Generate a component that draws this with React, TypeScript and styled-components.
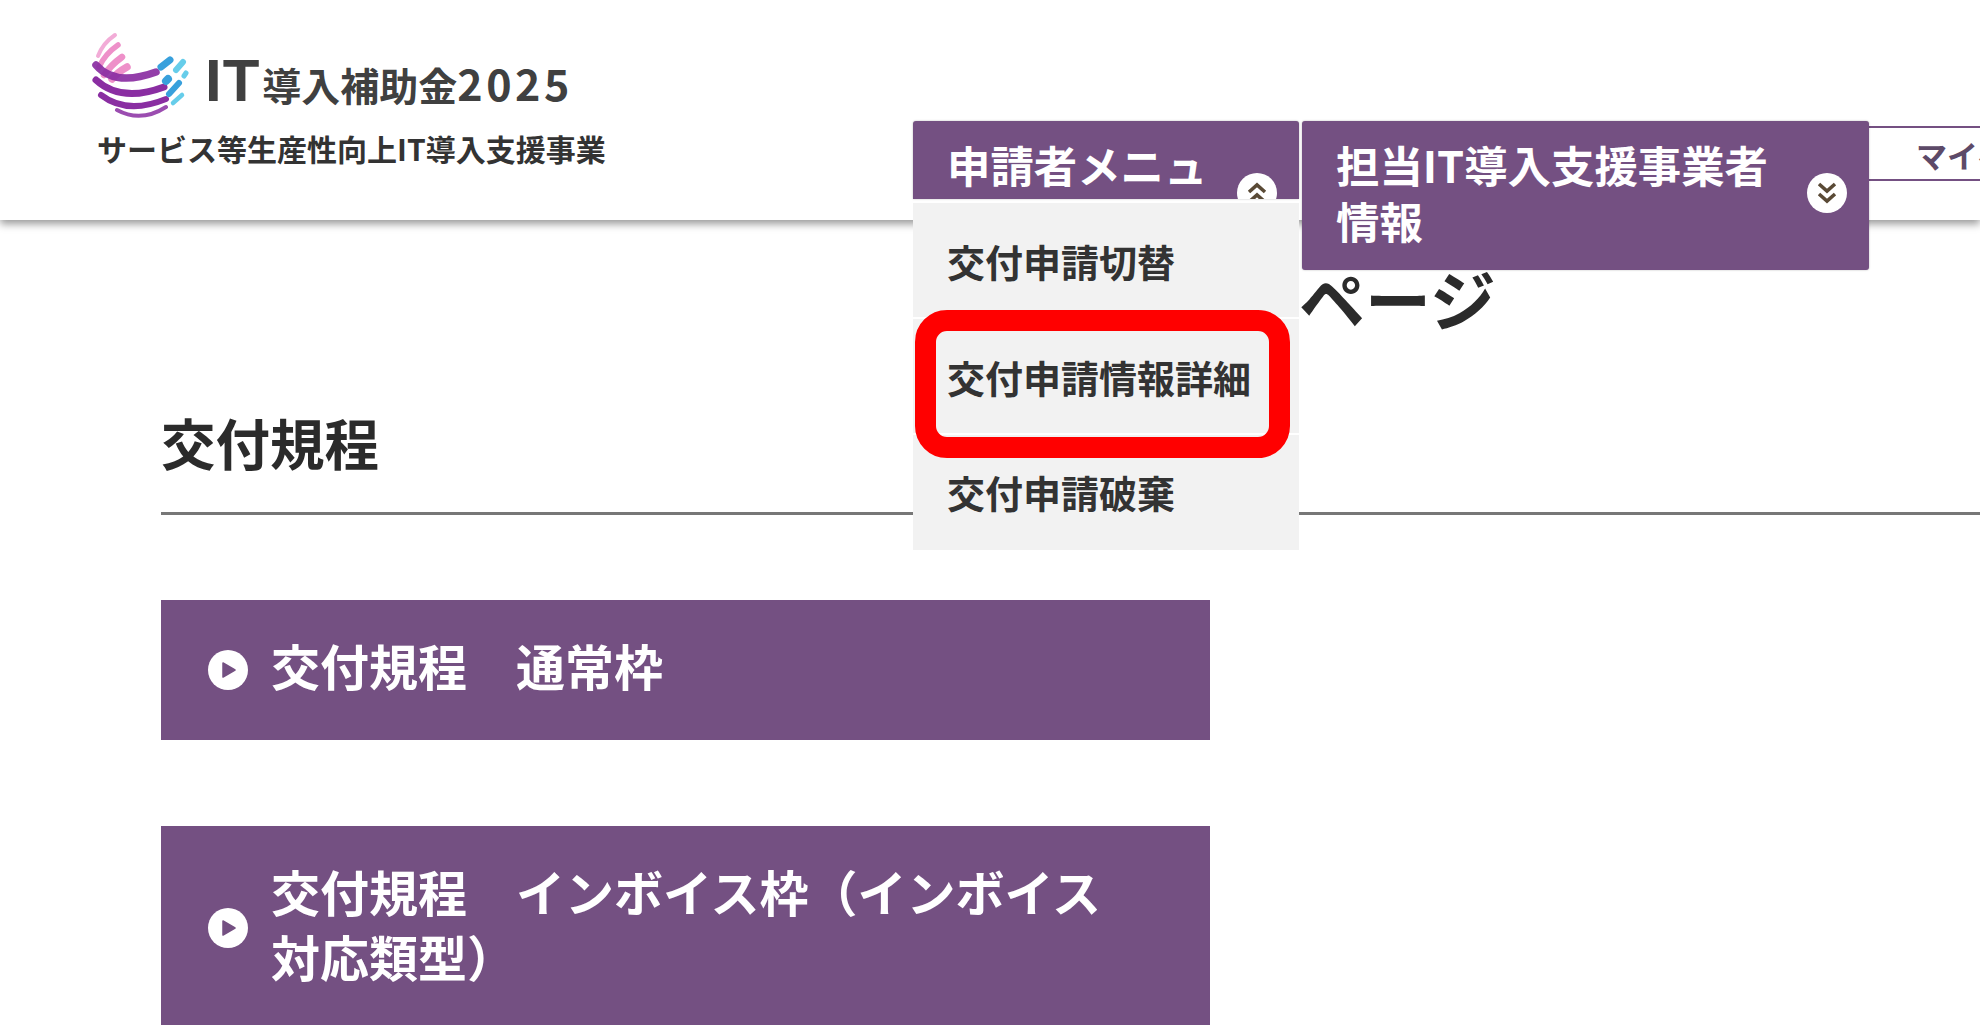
import styled, { createGlobalStyle } from 'styled-components'

const PURPLE = '#745082'

const GlobalStyle = createGlobalStyle`
  html, body {
    margin: 0;
    padding: 0;
    background: #fff;
    overflow: hidden;
  }
  body {
    font-family: "Noto Sans CJK JP", "Noto Sans", sans-serif;
    font-weight: 700;
    color: #333;
  }
`

const Page = styled.div`
  width: 1980px;
  height: 1025px;
  overflow: hidden;
`

const Header = styled.header`
  position: relative;
  z-index: 2;
  display: flex;
  height: 220px;
  background: #fff;
  box-shadow: 0 4px 8px rgba(0, 0, 0, 0.4);
`

const Brand = styled.div`
  flex: 0 0 820px;
  margin-left: 93px;
  padding-top: 25px;
  box-sizing: border-box;
`

const BrandTop = styled.div`
  display: flex;
  align-items: flex-end;
  height: 90px;
`

const Logo = styled.svg`
  flex: none;
  width: 120px;
  height: 100px;
  margin: 0 0 -10px -8px;
`

const BrandName = styled.div`
  display: flex;
  align-items: baseline;
  color: #404040;
  line-height: 60px;
  white-space: nowrap;
  margin-bottom: 1px;
`

const BrandIt = styled.span`
  font-size: 60px;
  letter-spacing: 1px;
  margin-right: 2px;
  font-family: "Liberation Sans", sans-serif;
`

const BrandKanji = styled.span`
  font-size: 39px;
`

const BrandYear = styled.span`
  font-size: 43px;
  letter-spacing: 3.5px;
`

const BrandSub = styled.div`
  margin: 15px 0 0 4px;
  font-size: 30px;
  line-height: 36px;
  color: #333;
  white-space: nowrap;
`

const Nav = styled.nav`
  display: flex;
  align-items: flex-start;
  gap: 3px;
  padding-top: 121px;
  min-width: 0;
  flex: 1;
`

const MenuWrap = styled.div`
  position: relative;
  flex: none;
`

const MenuButton = styled.div<{ $width: number; $rightPad: number; $height?: number }>`
  position: relative;
  flex: none;
  box-sizing: border-box;
  width: ${p => p.$width}px;
  height: ${p => (p.$height ? `${p.$height}px` : 'auto')};
  overflow: hidden;
  padding: 15px ${p => p.$rightPad}px 22px 34px;
  background: ${PURPLE};
  border-radius: 3px 3px ${p => (p.$height ? '0 0' : '3px 3px')};
  box-shadow: 0 0 2px rgba(0, 0, 0, 0.3);
  color: #fff;
  font-size: 43.4px;
  line-height: 56px;
`

const Chevrons = styled.svg<{ $right: number }>`
  position: absolute;
  top: 52px;
  right: ${p => p.$right}px;
  width: 40px;
  height: 40px;
`

const Dropdown = styled.ul`
  position: absolute;
  top: 82px;
  left: 0;
  width: 386px;
  margin: 0;
  padding: 0;
  list-style: none;
  background: #f2f2f2;
`

const DropdownItem = styled.li`
  display: flex;
  align-items: center;
  box-sizing: border-box;
  height: 116px;
  padding-left: 34px;
  border-bottom: 2px solid #fff;
  font-size: 38px;
  color: #333;

  &:last-of-type {
    height: 115px;
    border-bottom: none;
    padding-bottom: 2px;
  }
`

const Highlight = styled.div`
  position: absolute;
  top: 107px;
  left: 2px;
  box-sizing: border-box;
  width: 375px;
  height: 148px;
  border: 21px solid #ff0000;
  border-radius: 32px;
`

const MyPageLink = styled.div`
  flex: none;
  box-sizing: border-box;
  width: 400px;
  height: 55px;
  margin: 5px 0 0 -3px;
  padding-left: 47px;
  border-top: 2px solid ${PURPLE};
  border-bottom: 2px solid ${PURPLE};
  color: #5d4a68;
  font-size: 31px;
  line-height: 54px;
  white-space: nowrap;
`

const Main = styled.main`
  padding: 37px 0 0 161px;
`

const PageTitle = styled.h1`
  margin: 0 0 0 1006px;
  font-size: 66px;
  line-height: 80px;
  font-weight: 700;
  color: #2b2b2b;
  white-space: nowrap;
`

const SectionTitle = styled.h2`
  margin: 70px 0 0;
  padding-bottom: 35px;
  border-bottom: 3px solid #777;
  font-size: 54.5px;
  line-height: 70px;
  font-weight: 700;
  color: #2b2b2b;
`

const LinkList = styled.div`
  display: flex;
  flex-direction: column;
  gap: 86px;
  width: 1049px;
  margin-top: 85px;
`

const LinkCard = styled.a`
  display: flex;
  align-items: center;
  gap: 23px;
  padding: 37px 80px 38px 47px;
  background: ${PURPLE};
  color: #fff;
  font-size: 49px;
  line-height: 65px;
`

const LinkLabel = styled.span`
  margin-top: -5px;
  margin-bottom: 5px;
`

const PlayIcon = styled.svg`
  flex: none;
  width: 40px;
  height: 40px;
`

function LogoMark() {
  return (
    <Logo viewBox="0 0 120 100" fill="none" strokeLinecap="round">
      <g stroke="#ee90c9">
        <path d="M13 31Q18 18 30 10" strokeWidth="4" opacity="0.75" />
        <path d="M14 42Q20 29 33 20" strokeWidth="5.5" />
        <path d="M19 50Q26 40 37 32" strokeWidth="6.5" />
        <path d="M27 54Q33 47 42 42" strokeWidth="7.5" />
      </g>
      <g stroke="#8a2ea2">
        <path d="M11 40Q30 62 71 47" strokeWidth="7.5" opacity="0.92" />
        <path d="M11 55Q36 78 79 62" strokeWidth="7" />
        <path d="M16 70Q42 90 81 74" strokeWidth="6" />
        <path d="M32 85Q56 98 81 82" strokeWidth="4" opacity="0.85" />
      </g>
      <g stroke="#38a0dc">
        <path d="M76 42L85 35" strokeWidth="7" />
        <path d="M81 56L83 54" strokeWidth="8" />
        <path d="M84 69L94 58" strokeWidth="6" />
      </g>
      <g stroke="#66cdea">
        <path d="M91 45L98 37" strokeWidth="6" />
        <path d="M99 51L101 48" strokeWidth="5" />
        <path d="M88 78L97 70" strokeWidth="4.5" />
      </g>
    </Logo>
  )
}

function ChevronBadge({ up, right }: { up?: boolean; right: number }) {
  return (
    <Chevrons $right={right} viewBox="0 0 40 40">
      <circle cx="20" cy="20" r="20" fill="#fff" />
      <g
        fill="none"
        stroke="#5a4a36"
        strokeWidth="3.6"
        transform={up ? undefined : 'rotate(180 20 20)'}
      >
        <path d="M12 19L20 12L28 19" />
        <path d="M12 29L20 22L28 29" />
      </g>
    </Chevrons>
  )
}

function Play() {
  return (
    <PlayIcon viewBox="0 0 40 40">
      <circle cx="20" cy="20" r="20" fill="#fff" />
      <path d="M15 13L27 20L15 27Z" fill={PURPLE} stroke={PURPLE} strokeWidth="1.5" strokeLinejoin="round" />
    </PlayIcon>
  )
}

export default function App() {
  return (
    <Page>
      <GlobalStyle />
      <Header>
        <Brand>
          <BrandTop>
            <LogoMark />
            <BrandName>
              <BrandIt>IT</BrandIt>
              <BrandKanji>導入補助金</BrandKanji>
              <BrandYear>2025</BrandYear>
            </BrandName>
          </BrandTop>
          <BrandSub>サービス等生産性向上IT導入支援事業</BrandSub>
        </Brand>
        <Nav>
          <MenuWrap>
            <MenuButton $width={386} $rightPad={40} $height={78}>
              申請者メニュ
              <ChevronBadge up right={22} />
            </MenuButton>
            <Dropdown>
              <DropdownItem>交付申請切替</DropdownItem>
              <DropdownItem>交付申請情報詳細</DropdownItem>
              <DropdownItem>交付申請破棄</DropdownItem>
              <Highlight />
            </Dropdown>
          </MenuWrap>
          <MenuButton $width={567} $rightPad={92}>
            担当IT導入支援事業者情報
            <ChevronBadge right={22} />
          </MenuButton>
          <MyPageLink>マイページ</MyPageLink>
        </Nav>
      </Header>
      <Main>
        <PageTitle>マイページ</PageTitle>
        <SectionTitle>交付規程</SectionTitle>
        <LinkList>
          <LinkCard>
            <Play />
            <LinkLabel>交付規程　通常枠</LinkLabel>
          </LinkCard>
          <LinkCard>
            <Play />
            <LinkLabel>交付規程　インボイス枠（インボイス対応類型）</LinkLabel>
          </LinkCard>
        </LinkList>
      </Main>
    </Page>
  )
}
